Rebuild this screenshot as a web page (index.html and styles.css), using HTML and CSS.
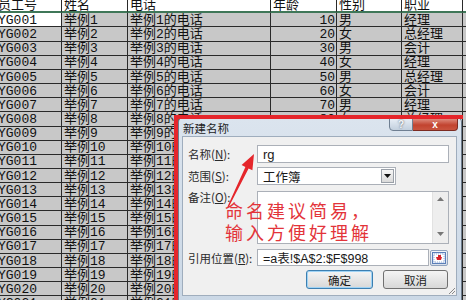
FILE: index.html
```html
<!DOCTYPE html>
<html lang="zh-CN">
<head>
<meta charset="utf-8">
<title>新建名称</title>
<link rel="stylesheet" href="styles.css">
</head>
<body>
<div class="sheet">
  <div class="c h">员工号</div><div class="c h">姓名</div><div class="c h">电话</div><div class="c h">年龄</div><div class="c h">性别</div><div class="c h">职业</div><div class="c h"></div>
  <div class="c w">YG001</div><div class="c">举例1</div><div class="c">举例1的电话</div><div class="c n">10</div><div class="c">男</div><div class="c">经理</div><div class="c"></div>
  <div class="c">YG002</div><div class="c">举例2</div><div class="c">举例2的电话</div><div class="c n">20</div><div class="c">女</div><div class="c">总经理</div><div class="c"></div>
  <div class="c">YG003</div><div class="c">举例3</div><div class="c">举例3的电话</div><div class="c n">30</div><div class="c">男</div><div class="c">会计</div><div class="c"></div>
  <div class="c">YG004</div><div class="c">举例4</div><div class="c">举例4的电话</div><div class="c n">40</div><div class="c">女</div><div class="c">经理</div><div class="c"></div>
  <div class="c">YG005</div><div class="c">举例5</div><div class="c">举例5的电话</div><div class="c n">50</div><div class="c">男</div><div class="c">总经理</div><div class="c"></div>
  <div class="c">YG006</div><div class="c">举例6</div><div class="c">举例6的电话</div><div class="c n">60</div><div class="c">女</div><div class="c">会计</div><div class="c"></div>
  <div class="c">YG007</div><div class="c">举例7</div><div class="c">举例7的电话</div><div class="c n">70</div><div class="c">男</div><div class="c">经理</div><div class="c"></div>
  <div class="c">YG008</div><div class="c">举例8</div><div class="c">举例8的电话</div><div class="c n">80</div><div class="c">女</div><div class="c">总经理</div><div class="c"></div>
  <div class="c">YG009</div><div class="c">举例9</div><div class="c">举例9的电话</div><div class="c n">90</div><div class="c">男</div><div class="c">会计</div><div class="c"></div>
  <div class="c">YG010</div><div class="c">举例10</div><div class="c">举例10的电话</div><div class="c n">100</div><div class="c">女</div><div class="c">经理</div><div class="c"></div>
  <div class="c">YG011</div><div class="c">举例11</div><div class="c">举例11的电话</div><div class="c n">110</div><div class="c">男</div><div class="c">总经理</div><div class="c"></div>
  <div class="c">YG012</div><div class="c">举例12</div><div class="c">举例12的电话</div><div class="c n">120</div><div class="c">女</div><div class="c">会计</div><div class="c"></div>
  <div class="c">YG013</div><div class="c">举例13</div><div class="c">举例13的电话</div><div class="c n">130</div><div class="c">男</div><div class="c">经理</div><div class="c"></div>
  <div class="c">YG014</div><div class="c">举例14</div><div class="c">举例14的电话</div><div class="c n">140</div><div class="c">女</div><div class="c">总经理</div><div class="c"></div>
  <div class="c">YG015</div><div class="c">举例15</div><div class="c">举例15的电话</div><div class="c n">150</div><div class="c">男</div><div class="c">会计</div><div class="c"></div>
  <div class="c">YG016</div><div class="c">举例16</div><div class="c">举例16的电话</div><div class="c n">160</div><div class="c">女</div><div class="c">经理</div><div class="c"></div>
  <div class="c">YG017</div><div class="c">举例17</div><div class="c">举例17的电话</div><div class="c n">170</div><div class="c">男</div><div class="c">总经理</div><div class="c"></div>
  <div class="c">YG018</div><div class="c">举例18</div><div class="c">举例18的电话</div><div class="c n">180</div><div class="c">女</div><div class="c">会计</div><div class="c"></div>
  <div class="c">YG019</div><div class="c">举例19</div><div class="c">举例19的电话</div><div class="c n">190</div><div class="c">男</div><div class="c">经理</div><div class="c"></div>
  <div class="c">YG020</div><div class="c">举例20</div><div class="c">举例20的电话</div><div class="c n">200</div><div class="c">女</div><div class="c">总经理</div><div class="c"></div>
  <div class="c">YG021</div><div class="c">举例21</div><div class="c">举例21的电话</div><div class="c n">210</div><div class="c">男</div><div class="c">会计</div><div class="c"></div>
</div>

<div class="dlg">
  <div class="tbar">
    <span class="ttl">新建名称</span>
    <span class="tbtns">
      <span class="tb help">?</span>
      <span class="tb close">x</span>
    </span>
  </div>
  <div class="client">
    <div class="form">
      <div class="row r1">
        <span class="lbl">名称(<u>N</u>):</span>
        <span class="field f-name">rg</span>
      </div>
      <div class="row r2">
        <span class="lbl">范围(<u>S</u>):</span>
        <span class="field f-combo">工作簿<span class="drop"><svg width="7" height="4" viewBox="0 0 7 4"><path d="M0 0h7L3.5 4z" fill="#111"/></svg></span></span>
      </div>
      <div class="row r3">
        <span class="lbl top">备注(<u>O</u>):</span>
        <span class="field f-memo"><span class="sbar"><svg width="7" height="4" viewBox="0 0 7 4"><path d="M0 4h7L3.5 0z" fill="#777"/></svg><svg width="7" height="4" viewBox="0 0 7 4"><path d="M0 0h7L3.5 4z" fill="#777"/></svg></span></span>
      </div>
      <div class="row r4">
        <span class="lbl">引用位置(<u>R</u>):</span>
        <span class="field f-ref">=a表!$A$2:$F$998</span>
        <span class="refbtn"><svg width="14" height="12" viewBox="0 0 14 12"><rect x="0.5" y="0.5" width="13" height="11" fill="#dfe8f6" stroke="#5b7fb8"/><rect x="2" y="2" width="10" height="8" fill="#fff" stroke="#9ab0d6" stroke-dasharray="1 1"/><path d="M4 5h6l-1 3H5z" fill="#d8232a"/><rect x="6" y="3" width="3" height="2" fill="#d8232a"/></svg></span>
      </div>
      <div class="row r5">
        <span class="btn ok">确定</span>
        <span class="btn">取消</span>
      </div>
    </div>
    <svg class="grip" width="9" height="9" viewBox="0 0 9 9"><path d="M8 2L2 8M8 5L5 8" stroke="#8a8a8a" stroke-width="1"/></svg>
  </div>
</div>

<div class="frame"></div>

<svg class="arrow" width="45" height="70" viewBox="0 0 45 70">
  <path d="M34 9L32.4 25.2L28.6 23.4L8.6 62.3L7.4 61.8L25.4 21.9L21.6 20Z" fill="#e5262b"/>
</svg>

<div class="note">命名建议简易，<br>输入方便好理解</div>
</body>
</html>
```
FILE: styles.css
```css
html, body {
  margin: 0;
  padding: 0;
}
body {
  width: 466px;
  height: 300px;
  overflow: hidden;
  position: relative;
  background: #fff;
  font-family: "Liberation Mono", "Noto Sans CJK SC", monospace;
}

/* spreadsheet */
.sheet {
  display: grid;
  grid-template-columns: 66px 66px 143px 66px 65px 61px 40px;
  grid-template-rows: 13.3px;
  grid-auto-rows: 14.17px;
  margin-left: -4px;
  width: 507px;
}
.c {
  box-sizing: border-box;
  border-right: 1px solid #2a2a2a;
  border-bottom: 1px solid #2a2a2a;
  background: #c8c8c8;
  color: #111;
  font-size: 13px;
  line-height: 13px;
  padding: 1px 0 0 2px;
  white-space: nowrap;
  overflow: hidden;
  display: flex;
  align-items: center;
}
.h {
  background: #fff;
  border-bottom: 2px solid #3f7758;
  padding-top: 0;
}
.w { background: #fff; }
.n {
  justify-content: flex-end;
  padding-right: 1px;
}

/* dialog */
.dlg {
  position: absolute;
  left: 178px;
  top: 117px;
  width: 284px;
  height: 184px;
  box-sizing: border-box;
  background: linear-gradient(#dbe4ee, #cbd8e6);
  border: 1px solid #6e7d8e;
  border-radius: 5px 5px 0 0;
  display: flex;
  flex-direction: column;
  font-family: "Noto Sans CJK SC", "Liberation Sans", sans-serif;
}
.tbar {
  height: 18px;
  flex: none;
  display: flex;
  align-items: center;
  padding-left: 4px;
}
.ttl {
  font-size: 11.5px;
  color: #1d1d1d;
  margin-top: 2px;
}
.tbtns {
  margin-left: auto;
  margin-right: 3px;
  align-self: flex-start;
  display: flex;
}
.tb {
  height: 13px;
  display: flex;
  align-items: center;
  justify-content: center;
  box-sizing: border-box;
  font-family: "Liberation Sans", sans-serif;
  font-weight: bold;
  font-size: 10px;
  color: #fff;
}
.help {
  width: 24px;
  background: linear-gradient(#e6edf5, #c2cfdd);
  border: 1px solid #6f7f92;
  border-radius: 0 0 0 4px;
  color: #f6f8fb;
  text-shadow: 0 0 2px #3a4450;
}
.close {
  width: 45px;
  background: linear-gradient(#dd8a7c, #c2432f 55%, #c9543f);
  border: 1px solid #7c2b22;
  border-left: none;
  border-radius: 0 0 4px 0;
}
.client {
  flex: 1;
  margin: 0 4px 4px 3px;
  background: #f0f0f0;
  border: 1px solid #9fadbd;
  position: relative;
}
.form {
  display: flex;
  flex-direction: column;
  gap: 4px;
  padding: 8px 0 0 5px;
}
.row {
  display: flex;
  align-items: center;
}
.r1, .r2 { height: 18px; }
.r3 { height: 53px; margin-top: 2px; align-items: stretch; }
.r4 { height: 17px; margin-top: 1px; }
.r5 { height: 19px; padding-left: 118px; gap: 10px; align-items: stretch; }
.lbl {
  width: 69px;
  flex: none;
  font-size: 11.5px;
  line-height: 14px;
  color: #2a2a2a;
}
.lbl u { text-decoration-thickness: 1px; }
.lbl.top { padding-top: 0; margin-top: -1px; }
.field {
  box-sizing: border-box;
  height: 100%;
  background: #fff;
  border: 1px solid #abb0b8;
  display: flex;
  align-items: center;
  padding-left: 5px;
  font-size: 12.5px;
  color: #1a1a1a;
  font-family: "Liberation Sans", "Noto Sans CJK SC", sans-serif;
}
.f-name { width: 192px; font-size: 13px; }
.f-combo {
  width: 139px;
  position: relative;
  font-family: "Noto Sans CJK SC", sans-serif;
  font-size: 12.5px;
}
.drop {
  margin-left: auto;
  margin-right: 1px;
  width: 13px;
  height: 14px;
  box-sizing: border-box;
  border: 1px solid #9aa0a8;
  background: linear-gradient(#f6f6f6, #dadada);
  display: flex;
  align-items: center;
  justify-content: center;
}
.f-memo {
  width: 192px;
  justify-content: flex-end;
  padding: 0;
  align-items: stretch;
}
.sbar {
  width: 15px;
  background: #eeeeee;
  border-left: 1px solid #e2e2e2;
  display: flex;
  flex-direction: column;
  justify-content: space-between;
  align-items: center;
  padding: 5px 0 7px;
}
.f-ref { width: 172px; }
.refbtn {
  margin-left: 1px;
  width: 18px;
  height: 16px;
  box-sizing: border-box;
  border: 1px solid #8fa2bd;
  background: linear-gradient(#f4f7fb, #d6deea);
  border-radius: 2px;
  display: flex;
  align-items: center;
  justify-content: center;
}
.btn {
  width: 65px;
  box-sizing: border-box;
  border: 1px solid #707070;
  border-radius: 3px;
  background: linear-gradient(#f4f4f4, #e6e6e6 50%, #d8d8d8);
  display: flex;
  align-items: center;
  justify-content: center;
  font-size: 11.5px;
  color: #1a1a1a;
}
.btn.ok {
  width: 67px;
  border-color: #3c7fb1;
  box-shadow: inset 0 0 0 1px #9fd3f5;
}
.grip {
  position: absolute;
  right: 0;
  bottom: 0;
}

/* annotation */
.frame {
  position: absolute;
  left: 174px;
  top: 115px;
  width: 285px;
  height: 190px;
  border-top: 4px solid #e5262b;
  border-left: 4px solid #e5262b;
}
.arrow {
  position: absolute;
  left: 220px;
  top: 145px;
}
.note {
  position: absolute;
  left: 225px;
  top: 199px;
  font-family: "Noto Sans CJK SC", sans-serif;
  font-size: 18px;
  line-height: 22px;
  letter-spacing: 3px;
  color: #e3343a;
  white-space: nowrap;
}
```
